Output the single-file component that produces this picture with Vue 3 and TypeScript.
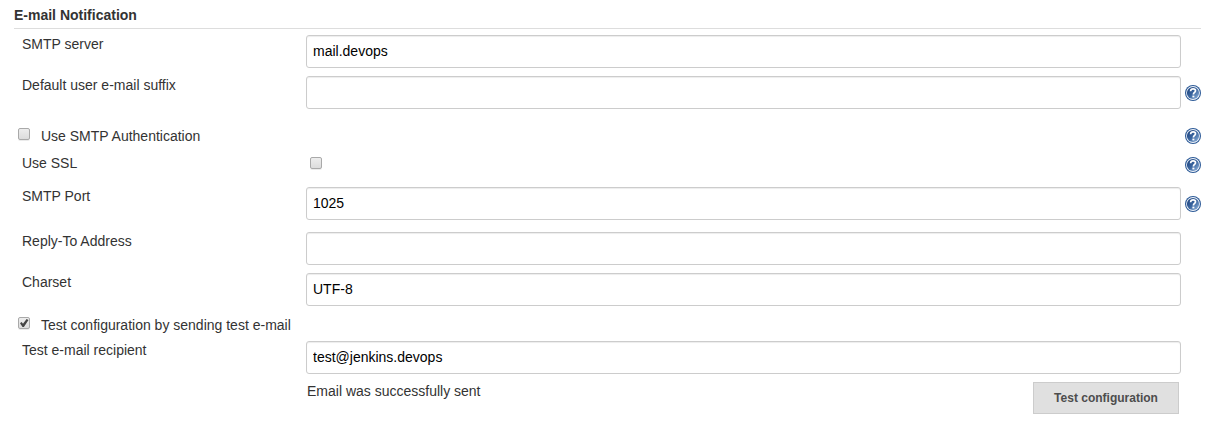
<script setup lang="ts">
import { reactive } from 'vue'

interface Row {
  id: string
  kind: 'text' | 'toggle' | 'check'
  label: string
  value?: string
  checked?: boolean
  help?: boolean
}

const rows = reactive<Row[]>([
  { id: 'server', kind: 'text', label: 'SMTP server', value: 'mail.devops' },
  { id: 'suffix', kind: 'text', label: 'Default user e-mail suffix', value: '', help: true },
  { id: 'auth', kind: 'toggle', label: 'Use SMTP Authentication', checked: false, help: true },
  { id: 'ssl', kind: 'check', label: 'Use SSL', checked: false, help: true },
  { id: 'port', kind: 'text', label: 'SMTP Port', value: '1025', help: true },
  { id: 'reply', kind: 'text', label: 'Reply-To Address', value: '' },
  { id: 'charset', kind: 'text', label: 'Charset', value: 'UTF-8' },
  { id: 'test', kind: 'toggle', label: 'Test configuration by sending test e-mail', checked: true },
  { id: 'recipient', kind: 'text', label: 'Test e-mail recipient', value: 'test@jenkins.devops' },
])
</script>

<template>
  <form class="section" @submit.prevent>
    <h2 class="title">E-mail Notification</h2>
    <div v-for="row in rows" :key="row.id" class="row" :class="[row.kind, row.id]">
      <label v-if="row.kind === 'toggle'" class="toggle-label">
        <input v-model="row.checked" class="box" type="checkbox" />
        <span class="toggle-text">{{ row.label }}</span>
      </label>
      <template v-else>
        <label class="label" :for="row.id">{{ row.label }}</label>
        <input v-if="row.kind === 'text'" :id="row.id" v-model="row.value" class="field" type="text" spellcheck="false" />
        <input v-else :id="row.id" v-model="row.checked" class="box" type="checkbox" />
      </template>
      <svg v-if="row.help" class="help" viewBox="0 0 16 16" role="img" aria-label="Help">
        <defs>
          <linearGradient :id="'g-' + row.id" x1="0" y1="0" x2="1" y2="1">
            <stop offset="0.1" stop-color="#1f4580" />
            <stop offset="0.5" stop-color="#3a659f" />
            <stop offset="0.9" stop-color="#86aad4" />
          </linearGradient>
        </defs>
        <circle cx="8" cy="8" r="8" fill="#2c5a97" />
        <circle cx="8" cy="8" r="6.9" fill="#f4f7fb" />
        <circle cx="8" cy="8" r="6.1" :fill="`url(#g-${row.id})`" />
        <path d="M5.6 6.2C5.7 4.4 6.7 3.9 8.1 3.9C9.6 3.9 10.5 4.6 10.5 5.8C10.5 7.4 8.4 7.4 8.4 9.4" fill="none" stroke="#fff" stroke-width="1.7" />
        <rect x="7.4" y="10.6" width="2" height="1.8" fill="#fff" />
      </svg>
    </div>
    <div class="row result">
      <span class="status">Email was successfully sent</span>
      <button class="button" type="button">Test configuration</button>
    </div>
  </form>
</template>

<style>
body {
  background: #fff;
}
</style>

<style scoped>
.section {
  box-sizing: border-box;
  width: 1207px;
  height: 435px;
  padding: 6px 6px 0 14px;
  overflow: hidden;
  font: 14px/18px "Liberation Sans", Arial, sans-serif;
  color: #333;
}
.title {
  box-sizing: border-box;
  height: 23px;
  margin: 0 0 6px;
  border-bottom: 1px solid #ddd;
  font-size: 14px;
  font-weight: bold;
  line-height: 18px;
}
.row {
  display: grid;
  grid-template-columns: 292px 875px 16px;
  column-gap: 0;
  align-items: start;
  height: 41px;
}
.label {
  padding-left: 8px;
}
.field {
  box-sizing: border-box;
  width: 875px;
  height: 33px;
  margin: 0;
  padding: 0 6px 1px;
  border: 1px solid #ccc;
  border-radius: 3px;
  outline: 0;
  background: #fff;
  box-shadow: inset 0 1px 1px rgba(0, 0, 0, 0.075);
  color: #000;
  font: inherit;
}
.help {
  display: block;
  grid-column: 3;
  width: 16px;
  height: 16px;
  margin: 9px 0 0 4px;
}
.suffix {
  height: 50px;
}
.auth {
  height: 28px;
}
.auth .help {
  margin-top: 2px;
}
.ssl {
  height: 33px;
}
.ssl .help {
  margin-top: 3px;
}
.ssl .box {
  margin: 3px 0 0 4px;
}
.port {
  height: 45px;
}
.test {
  height: 27px;
}
.toggle-label {
  display: flex;
  grid-column: 1 / 3;
  align-items: flex-start;
  padding-left: 4px;
}
.toggle-label .box {
  margin-top: 2px;
}
.test .box {
  margin-top: 3px;
}
.toggle-text {
  margin: 1px 0 0 11px;
}
.test .toggle-text {
  margin-top: 2px;
}
.box {
  appearance: none;
  display: grid;
  box-sizing: border-box;
  flex: none;
  width: 12px;
  height: 12px;
  margin: 0;
  border: 1px solid #a9a9a9;
  border-radius: 2px;
  background: linear-gradient(#ededed, #dcdcdc);
  box-shadow: 0 1px 0 rgba(0, 0, 0, 0.08);
}
.box:checked::after {
  content: "";
  background: #444;
  clip-path: polygon(10% 52%, 26% 40%, 40% 58%, 76% 9%, 95% 20%, 49% 90%, 35% 90%);
}
.result {
  grid-template-columns: 293px 1fr auto;
  padding-right: 22px;
}
.status {
  grid-column: 2;
}
.button {
  box-sizing: border-box;
  width: 146px;
  height: 32px;
  padding: 0;
  border: 1px solid #ccc;
  border-radius: 0;
  background: #e0e0e0;
  color: #4d4d4d;
  font: bold 12px/30px "Liberation Sans", Arial, sans-serif;
}
</style>
